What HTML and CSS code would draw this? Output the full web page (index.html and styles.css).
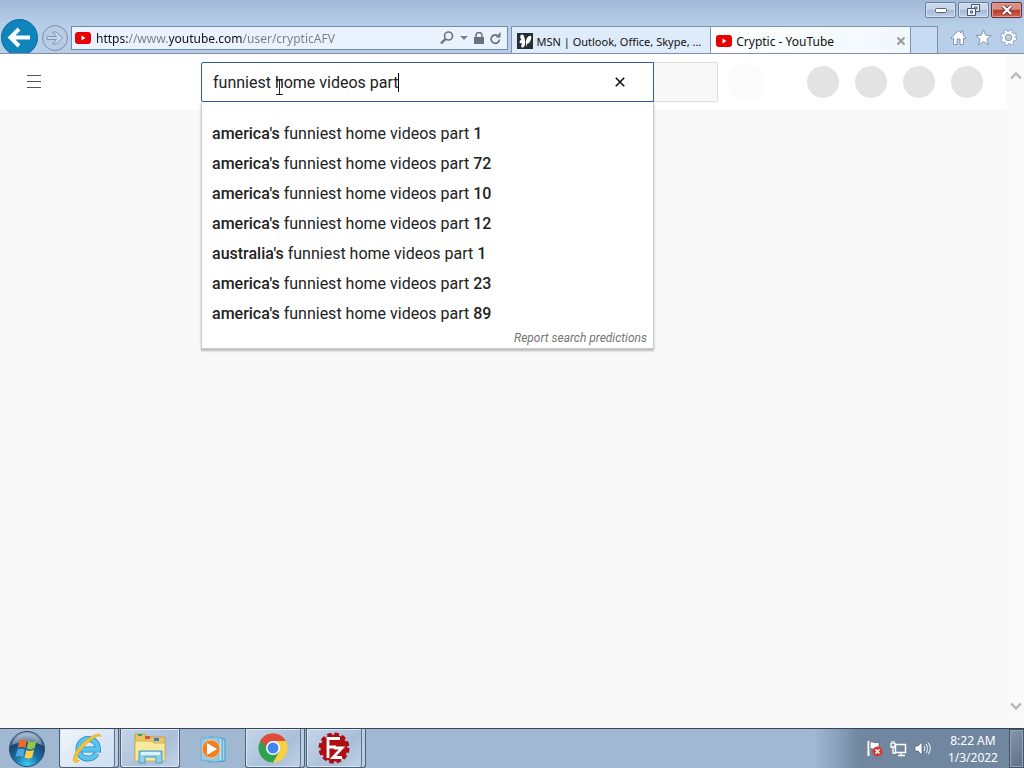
FILE: index.html
```html
<!DOCTYPE html>
<html lang="en">
<head>
<meta charset="utf-8">
<title>Cryptic - YouTube</title>
<link rel="stylesheet" href="styles.css">
</head>
<body>
<header class="browser">
  <div class="captions">
    <button class="caption" aria-label="Minimize"><svg width="12" height="6" viewBox="0 0 12 6"><rect x=".5" y="1.5" width="11" height="4" rx="1" fill="#fff" stroke="#56637a"/></svg></button>
    <button class="caption" aria-label="Restore"><svg width="13" height="12" viewBox="0 0 13 12"><g fill="#eef3fa" stroke="#46556e"><path d="M4.500 .5h8v7h-8z"/><path d="M7.500 3h2.500v2h-2.500z"/><path d="M.5 4.500h8v7h-8z"/><path d="M3.500 7h2v2h-2z"/></g></svg></button>
    <button class="caption caption-close" aria-label="Close"><svg width="12" height="10" viewBox="0 0 12 10"><path d="M2 1l8 8M10 1L2 9" stroke="#5a3436" stroke-width="4"/><path d="M2 1l8 8M10 1L2 9" stroke="#fff" stroke-width="2.400"/></svg></button>
  </div>
  <div class="navrow">
    <button class="back" aria-label="Back"><svg width="38" height="35" viewBox="0 0 38 35"><circle cx="19.500" cy="19.500" r="18" fill="#0f85bb" stroke="#0b6a9c"/><path d="M30 19.500H12M19 11l-8.500 8.500L19 28" fill="none" stroke="#fff" stroke-width="4"/></svg></button>
    <button class="forward" aria-label="Forward"><svg width="28" height="28" viewBox="0 0 28 28"><circle cx="14" cy="14" r="12.500" fill="#b9cbe3" stroke="#7b90b0"/><path d="M6 12.500h9.500l-4-4.500h4l6 6-6 6h-4l4-4.500H6z" fill="#c8d7ec" stroke="#7f94b4"/></svg></button>
    <form class="address">
      <svg class="favicon" width="16" height="12" viewBox="0 0 16 12"><rect width="16" height="12" rx="3" fill="#e60000"/><path d="M6.500 3.500v5l4-2.500z" fill="#fff"/></svg>
      <input class="url" type="text" aria-label="Address" value="https://www.youtube.com/user/crypticAFV">
      <button class="mini" type="button" aria-label="Search"><svg width="14" height="14" viewBox="0 0 14 14" fill="none" stroke="#69727e"><circle cx="8.500" cy="5" r="4" stroke-width="1.600"/><path d="M5.500 8L1 12.500" stroke-width="2.400"/></svg></button>
      <button class="mini" type="button" aria-label="Search options"><svg width="8" height="4" viewBox="0 0 8 4"><path d="M0 0h8L4 4z" fill="#7b8591"/></svg></button>
      <button class="mini" type="button" aria-label="Security report"><svg width="10" height="13" viewBox="0 0 10 13"><path d="M2 7V3.500a3 3 0 0 1 6 0V7" fill="none" stroke="#69727e" stroke-width="1.500"/><rect y="5" width="10" height="7" fill="#69727e"/></svg></button>
      <button class="mini" type="button" aria-label="Refresh"><svg width="11" height="13" viewBox="0 0 11 13"><path d="M9.500 7.500A4.200 4.200 0 1 1 7.500 3.500" fill="none" stroke="#69727e" stroke-width="1.700"/><path d="M5.500 5.500h5V0z" fill="#69727e"/></svg></button>
    </form>
    <nav class="tabs">
      <a class="tab" href="#msn"><svg width="16" height="16" viewBox="0 0 16 16"><rect width="16" height="16" fill="#252d38"/><path d="M8.300 8.500C7.500 6 7.500 1.500 5 1.500c-2.500 0-2 4-.5 5.500-2 0-2.500 2-1.500 3 .6.700 1.500.500 2.500.2C4 12 3.500 14.500 5.500 14.500c2.500 0 2.500-3.500 2.800-6z" fill="#fff"/><path d="M9 9c0-3 2-6.500 4.300-6.300C15.300 3.200 14 7 12.800 9c-1.300 2-2.300 1.800-2.800 1.500 0 1.500-.5 3-1 3z" fill="#fff"/></svg><span>MSN | Outlook, Office, Skype, ...</span></a>
      <div class="tab tab-active"><svg width="16" height="12" viewBox="0 0 16 12"><rect width="16" height="12" rx="3" fill="#e60000"/><path d="M6.500 3.500v5l4-2.500z" fill="#fff"/></svg><a href="#youtube">Cryptic - YouTube</a><button class="tab-close" aria-label="Close tab"><svg width="8" height="8" viewBox="0 0 8 8"><path d="M.5.5l7 7M7.500.5l-7 7" stroke="#989b9e" stroke-width="2"/></svg></button></div>
      <button class="newtab" aria-label="New tab"></button>
    </nav>
    <div class="tools">
      <button class="tool" aria-label="Home"><svg width="17" height="17" viewBox="0 0 17 17"><path d="M1 9l7.500-7.500L11 4V2h2v4l3 3-1 1-1.500-1v6.500H10V10H7v5.500H3.500V9L2 10z" fill="#fff" stroke="#7b8fae" stroke-width=".9"/></svg></button>
      <button class="tool" aria-label="Favorites"><svg width="17" height="17" viewBox="0 0 17 17"><path d="M8.500.8l2.200 5.400 5.600.3-4.400 3.600 1.600 5.700-5-3.300-5 3.300 1.600-5.700L.7 6.500l5.600-.3z" fill="#fff" stroke="#7b8fae" stroke-width=".9"/></svg></button>
      <button class="tool" aria-label="Tools"><svg width="17" height="17" viewBox="0 0 17 17"><g fill="none"><circle cx="8.500" cy="8.500" r="6.300" stroke="#7b8fae" stroke-width="4" stroke-dasharray="3 1.948"/><circle cx="8.500" cy="8.500" r="4.700" stroke="#7b8fae" stroke-width="4"/><circle cx="8.500" cy="8.500" r="6.200" stroke="#fff" stroke-width="2.800" stroke-dasharray="2.400 2.470" stroke-dashoffset="-.3"/><circle cx="8.500" cy="8.500" r="4.700" stroke="#fff" stroke-width="2.400"/></g></svg></button>
    </div>
  </div>
</header>
<main class="page">
  <div class="content">
    <div class="masthead">
      <div class="start"><button class="guide" aria-label="Guide"><svg width="16" height="14" viewBox="0 0 16 14"><path d="M1 .5h14M1 6.500h14M1 12.500h14" stroke="#555"/></svg></button></div>
      <form class="search">
        <div class="field">
          <input class="query" type="text" aria-label="Search" value="funniest home videos part">
          <span class="caret"></span>
          <svg class="ibeam" width="7" height="16" viewBox="0 0 7 16"><path d="M0 .5h2.500l1 1 1-1H7M3.500 1v14M0 15.500h7" fill="none" stroke="#222"/></svg>
          <button class="clear" type="button" aria-label="Clear search"><svg width="10" height="10" viewBox="0 0 10 10"><path d="M.8.8l8.400 8.400M9.200.8L.8 9.200" stroke="#111" stroke-width="1.600"/></svg></button>
          <div class="suggestions">
            <ul class="list">
              <li><b>america's</b> funniest home videos part <b>1</b></li>
              <li><b>america's</b> funniest home videos part <b>72</b></li>
              <li><b>america's</b> funniest home videos part <b>10</b></li>
              <li><b>america's</b> funniest home videos part <b>12</b></li>
              <li><b>australia's</b> funniest home videos part <b>1</b></li>
              <li><b>america's</b> funniest home videos part <b>23</b></li>
              <li><b>america's</b> funniest home videos part <b>89</b></li>
            </ul>
            <a class="report" href="#report">Report search predictions</a>
          </div>
        </div>
        <button class="go" type="button" aria-label="Submit search"></button>
      </form>
      <span class="mic"></span>
      <div class="dots"><span></span><span></span><span></span><span></span></div>
    </div>
  </div>
  <div class="scroll">
    <svg width="12" height="9" viewBox="0 0 12 9"><path d="M1 7.500l5-5 5 5" fill="none" stroke="#b8b8b8" stroke-width="2.400"/></svg>
    <svg width="12" height="9" viewBox="0 0 12 9"><path d="M1 1.500l5 5 5-5" fill="none" stroke="#b8b8b8" stroke-width="2.400"/></svg>
  </div>
</main>
<footer class="taskbar">
  <button class="orb" aria-label="Start"><svg width="38" height="38" viewBox="0 0 38 38">
    <defs><radialGradient id="orb" cx=".5" cy=".95" r=".9"><stop offset="0" stop-color="#3fd0f5"/><stop offset=".4" stop-color="#1870a6"/><stop offset=".75" stop-color="#1c4672"/><stop offset="1" stop-color="#8aa6c2"/></radialGradient></defs>
    <circle cx="19" cy="19" r="17.500" fill="url(#orb)" stroke="#304a68"/><path d="M4 15a15.500 15.500 0 0 1 30 0c-9-4-21-4-30 0z" fill="#fff" opacity=".35"/>
    <path d="M11.500 10.500c2.500-1.500 5-1.500 7.500 0l-1.800 7.500c-2.500-1.500-5-1.500-7.500 0z" fill="#ec6a2c"/><path d="M20.500 11c2.500 1.300 5 1.300 8-.3l-2 7.600c-2.800 1.500-5.300 1.500-7.800.2z" fill="#91c748"/><path d="M9.300 19.500c2.500-1.500 5-1.500 7.500 0L15 27c-2.500-1.500-5-1.500-7.500 0z" fill="#4ba6e2"/><path d="M18.300 20c2.500 1.300 5 1.300 7.800-.2l-2 7.600c-2.800 1.500-5.200 1.400-7.600.1z" fill="#fbcf46"/></svg></button>
  <button class="task task-active stacked" aria-label="Internet Explorer"><svg width="34" height="34" viewBox="0 0 34 34"><path d="M26.500 22.500c-1.500 3-4.500 5-8.500 5-6 0-9.500-4-9.500-9.500S12.500 8 18 8s10 4 10 10.500H12" fill="none" stroke="#2b88bd" stroke-width="6"/><path d="M26.500 22.500c-1.500 3-4.500 5-8.500 5-6 0-9.500-4-9.500-9.500S12.500 8 18 8s10 4 10 10.500H12" fill="none" stroke="#58c4ed" stroke-width="4.500"/><path d="M31 6c0-5-7-3-14 2.500C9 15 2 25 3.500 30c1 2.500 4 1 6-.5-5 .5-2.500-7 4.500-14S30 2 31 6z" fill="#f6c52e" stroke="#dda11d" stroke-width=".6"/></svg></button>
  <button class="task" aria-label="Windows Explorer"><svg width="34" height="34" viewBox="0 0 34 34"><path d="M2 8V3h10l2 3h18v20H2z" fill="#e8c565" stroke="#c6a248"/><path d="M5 3h4v2H5z" fill="#35a84c"/><path d="M12 5h5v3h-5z" fill="#dd5339"/><path d="M21 7h5v3h-5z" fill="#3c7dce"/><path d="M2 10h17l2 2h11v18H2z" fill="#f7e99e" stroke="#cdb05c"/><path d="M6 32V20h23v12h-6v-6H12v6z" fill="#8ed0ec" stroke="#4899c2"/><path d="M8 21h19v3H8z" fill="#d9f3fc"/></svg></button>
  <button class="task task-plain" aria-label="Windows Media Player"><svg width="28" height="28" viewBox="0 0 28 28"><path d="M16 3l10 1v22l-10 1z" fill="#9ed3ed" stroke="#3d9bc7"/><path d="M10 2l13 1v23l-13 1z" fill="#c1e7f5" stroke="#3d9bc7"/><path d="M2 3l18-1v25L2 25z" fill="#93cae6" stroke="#6cb2d3"/><circle cx="12" cy="14" r="9" fill="#ef7f24" stroke="#ffc286"/><path d="M8 8v12l10-6z" fill="#fff"/></svg></button>
  <button class="task stacked" aria-label="Google Chrome"><svg width="30" height="30" viewBox="0 0 30 30"><circle cx="15" cy="15" r="14.500" fill="#f9cf46"/><path d="M15 15L2.440 7.750A14.500 14.500 0 0 1 27.560 7.750H15z" fill="#df4b3c"/><path d="M2.440 7.750A14.500 14.500 0 0 0 15 29.500l6.300-10.900L15 15z" fill="#2da253"/><path d="M2.440 7.750l6.300 10.900L15 15V7.500z" fill="#2da253"/><path d="M2.440 7.750A14.500 14.500 0 0 1 27.560 7.750H15a7.300 7.300 0 0 0-7 6z" fill="#df4b3c"/><circle cx="15" cy="15" r="7" fill="#fff"/><circle cx="15" cy="15" r="5.500" fill="#4384f0"/></svg></button>
  <button class="task stacked" aria-label="FileZilla"><svg width="32" height="32" viewBox="0 0 32 32"><circle cx="16" cy="16" r="13.500" fill="none" stroke="#a80c12" stroke-width="4" stroke-dasharray="4.400 2.670"/><circle cx="16" cy="16" r="13.500" fill="#b30d14"/><path d="M10 26V6.500h12M10 15h8M16 16h8l-9 9.500h9" fill="none" stroke="#fff" stroke-width="2.800"/></svg></button>
  <div class="tray">
    <svg width="17" height="17" viewBox="0 0 17 17"><path d="M2.500 1v15" stroke="#fff" stroke-width="2"/><path d="M4 2c3-1 5 2 9 0v7c-4 2-6-1-9 0z" fill="#fff" stroke="#46566c" stroke-width=".7"/><circle cx="11.500" cy="11.500" r="5" fill="#d63a32"/><path d="M9.500 9.500l4 4M13.500 9.500l-4 4" stroke="#fff" stroke-width="1.500"/></svg>
    <svg width="17" height="17" viewBox="0 0 17 17"><path d="M5.500 4.500h10v8h-10z" fill="#71849b" stroke="#fff" stroke-width="1.500"/><path d="M8 15.500h7M11 13v2M1 3v4h4V3M2 1v3M4 1v3M3 7v6h3" fill="none" stroke="#fff" stroke-width="1.300"/></svg>
    <svg width="17" height="17" viewBox="0 0 17 17"><path d="M1 6h3l4-4v13l-4-4H1z" fill="#fff" stroke="#4c5d75" stroke-width=".7"/><path d="M10 6c1 1.500 1 3.500 0 5M12 4c2 3 2 6 0 9M14 2.500c3 4 3 8 0 12" fill="none" stroke="#fff"/></svg>
    <div class="clock"><time>8:22 AM</time><span>1/3/2022</span></div>
  </div>
  <button class="desktop" aria-label="Show desktop"></button>
</footer>
</body>
</html>
```

FILE: styles.css
```css
* { box-sizing: border-box; }
body {
  margin: 0;
  min-height: 100vh;
  display: flex;
  flex-direction: column;
  background: #f8f8f8;
  font-family: Roboto, sans-serif;
  color: #222;
}
button { padding: 0; border: 0; background: none; font: inherit; }
svg { display: block; flex: none; }
a { color: inherit; text-decoration: none; }

.browser {
  background: linear-gradient(#a0b9d6, #b8cfea 26px, #b9cde8);
  border-bottom: 1px solid #7f90aa;
  font-family: "Noto Sans", sans-serif;
  font-size: 12px;
}
.captions { display: flex; justify-content: flex-end; gap: 2px; height: 18px; padding: 2px 2px 0; }
.caption {
  width: 31px;
  height: 16px;
  display: grid;
  place-items: center;
  border: 1px solid #6d7f9b;
  border-radius: 2px;
  background: linear-gradient(#c8d8ec 45%, #a3b8d3 50%, #bdd0e8);
  box-shadow: inset 0 0 0 1px #d5e2f2;
}
.caption-close {
  border-color: #6a2c35;
  background: linear-gradient(#d99084 45%, #b93a27 50%, #cc6350);
  box-shadow: inset 0 0 0 1px #dea195;
}
.navrow { display: flex; height: 35px; }
.forward { margin: 6px 2px 0 3px; align-self: flex-start; }
.address {
  flex: 427 1 0;
  min-width: 0;
  display: flex;
  align-items: center;
  height: 24px;
  margin: 8px 3px 0 0;
  padding: 0 6px 0 3px;
  gap: 6px;
  background: #eaf2fd;
  border: 1px solid #6f88ad;
}
.url {
  flex: 1;
  min-width: 0;
  margin-left: -1px;
  padding: 0;
  border: 0;
  outline: 0;
  font: inherit;
  color: transparent;
  background: linear-gradient(90deg, #111 32px, #777d87 32px 73px, #111 73px 147px, #777d87 147px);
  -webkit-background-clip: text;
  background-clip: text;
}
.mini { display: flex; }
.tabs { flex: 428 1 0; min-width: 0; display: flex; margin-top: 8px; border-left: 1px solid #7f90aa; }
.tab {
  flex: 1;
  min-width: 0;
  display: flex;
  align-items: center;
  gap: 4px;
  padding: 2px 5px 0;
  background: #deebfa;
  border-top: 1px solid #7f90aa;
  border-right: 1px solid #7f90aa;
  color: #111;
  font-size: 11px;
  white-space: nowrap;
}
.tab-active { background: linear-gradient(90deg, #fcfeff, #f1f8fd); font-size: 12px; }
.tab-close { margin-left: auto; }
.newtab { width: 27px; background: #c7dcf5; border: 1px solid #7f90aa; border-width: 1px 1px 0 0; }
.tools { display: flex; gap: 8px; padding: 11px 7px 0 12px; align-items: flex-start; }

.page { flex: 1; display: flex; }
.content { flex: 1; min-width: 0; }
.masthead { display: flex; align-items: center; height: 56px; background: #fff; padding-right: 24px; }
.start { flex: 0 1 201px; padding-left: 26px; }
.guide { display: block; }
.search { flex: 0 1 517px; display: flex; height: 40px; }
.field {
  flex: 1;
  position: relative;
  display: flex;
  align-items: center;
  border: 1px solid #2f5b9b;
  border-radius: 2px 0 0 2px;
  background: #fff;
}
.query {
  flex: 1;
  min-width: 0;
  padding: 0 0 0 11px;
  border: 0;
  outline: 0;
  background: none;
  font: 16px Roboto, sans-serif;
  color: #222;
}
.caret { position: absolute; left: 196px; top: 10px; width: 1px; height: 19px; background: #000; }
.ibeam { position: absolute; left: 74px; top: 16px; }
.clear { margin-right: 28px; }
.go { width: 64px; background: #f8f8f8; border: 1px solid #ddd; border-left: 0; border-radius: 0 2px 2px 0; }
.suggestions {
  position: absolute;
  top: 39px;
  left: -1px;
  right: -1px;
  padding: 17px 6px 1px 10px;
  background: #fff;
  border: 1px solid #ccc;
  border-top: 0;
  box-shadow: 0 2px 2px #bbb;
}
.list { list-style: none; margin: 0; padding: 0; font-size: 16px; line-height: 30px; }
.list b { font-weight: 500; }
.report { display: block; text-align: right; font-size: 12px; line-height: 18px; font-style: italic; color: #757575; }
.mic { width: 38px; height: 38px; margin-left: 9px; border-radius: 50%; background: #fcfcfc; }
.dots { display: flex; gap: 16px; margin-left: auto; }
.dots span { width: 32px; height: 32px; border-radius: 50%; background: #e3e3e3; }
.scroll {
  width: 17px;
  display: flex;
  flex-direction: column;
  justify-content: space-between;
  align-items: center;
  padding: 17px 0;
  background: #f9f9f9;
}

.taskbar {
  display: flex;
  height: 40px;
  padding-left: 8px;
  border-top: 1px solid #35445a;
  background: #a1b8d3;
}
.orb { margin-right: 13px; }
.task {
  width: 60px;
  margin-right: 1px;
  display: grid;
  place-items: center;
  border: 1px solid #4d5e77;
  border-top: 0;
  border-radius: 0 0 3px 3px;
  box-shadow: inset 0 0 0 1px #dce7f3;
  background: linear-gradient(135deg, #c5d5e8, #a9bfd9 60%, #c2d3e7);
}
.task-active { background: linear-gradient(135deg, #f1f6fb, #d8e5f2 60%, #cadff0); }
.task-plain { width: 63px; border: 0; box-shadow: none; background: none; }
.stacked { padding-right: 4px; box-shadow: inset -3px 0 0 #bccde2, inset -4px 0 0 #60718a, inset 0 0 0 1px #dce7f3; }
.tray {
  flex: 1;
  display: flex;
  justify-content: flex-end;
  align-items: center;
  gap: 7px;
  padding-right: 11px;
  background: linear-gradient(270deg, #71869f 150px, #8298b4 165px, #a1b8d3 195px);
}
.clock {
  display: flex;
  flex-direction: column;
  align-items: center;
  margin-left: 10px;
  font: 12px/17px "Noto Sans", sans-serif;
  color: #fff;
}
.desktop { width: 15px; border: 1px solid #44556b; box-shadow: inset 0 0 0 1px #92a4ba; background: linear-gradient(135deg, #8596ab, #5f7188); }
```
